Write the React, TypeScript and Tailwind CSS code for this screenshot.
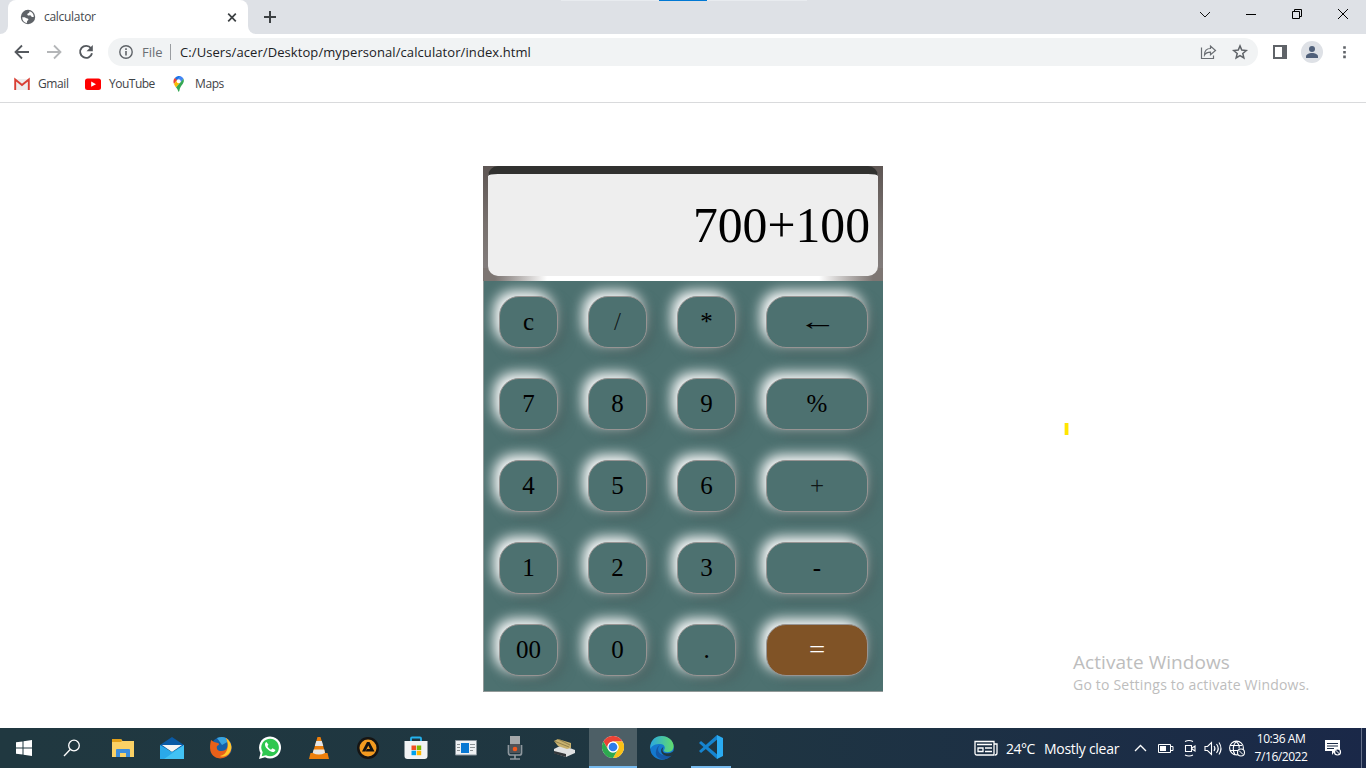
import React from "react";

type P = { children?: React.ReactNode; className?: string };

function Svg({ w, h, vb, children, className = "" }: P & { w: number; h: number; vb?: string }) {
  return (
    <svg width={w} height={h} viewBox={vb ?? `0 0 ${w} ${h}`} className={`shrink-0 ${className}`} fill="none">
      {children}
    </svg>
  );
}

function TabStrip() {
  return (
    <header className="flex h-[34px] shrink-0 bg-[#dee1e6]">
      <div className="flex w-2 items-end bg-white">
        <span className="h-[34px] w-2 rounded-br-lg bg-[#dee1e6]" />
      </div>
      <div className="flex w-[240px] items-center bg-[#dee1e6]">
        <div className="flex h-full w-full items-center rounded-t-lg bg-white pl-3">
          <Svg w={16} h={16} vb="0 0 16 16">
            <circle cx="8" cy="8" r="7.2" fill="#5f6368" />
            <path d="M2.2 8.2c1.2.2 2.3-.2 3.400.5 1.200.8 2.700.5 2.800 1.900.1 1-1.400 1-1.400 2.200v1.300C4.200 13.700 2.200 11.500 2.200 8.200zM9.500 2.300c0 1.300-.3 1.900-1.500 2.100-1 .2-.8 1.500-.2 1.900.9.600 1.500-.4 2.500 0 1 .5.8 1.700 1.900 1.800h1.600c0-2.900-1.700-5-4.300-5.800z" fill="#fff" />
          </Svg>
          <span className="ml-2 w-[180px] text-[12px] tracking-[-0.3px] text-[#45494d]">calculator</span>
          <Svg w={16} h={16}>
            <path d="M4.200 4.700l7.600 7.600M11.800 4.700l-7.600 7.600" stroke="#3c4043" strokeWidth="1.700" />
          </Svg>
        </div>
      </div>
      <div className="flex w-2 items-end bg-white">
        <span className="h-[34px] w-2 rounded-bl-lg bg-[#dee1e6]" />
      </div>
      <Svg w={28} h={34}>
        <path d="M8 17h12M14 11v12" stroke="#3c4043" strokeWidth="2" />
      </Svg>
      <div className="flex flex-1">
        <div className="ml-[277px] flex h-px w-[246px] bg-[#e8ebef]">
          <span className="ml-[98px] h-px w-[48px] bg-[#0078d4]" />
        </div>
      </div>
      <div className="flex w-[184px] shrink-0">
        <Svg w={46} h={28}>
          <path d="M18 12l5 5 5-5" stroke="#111" strokeWidth="1" />
        </Svg>
        <Svg w={46} h={28}>
          <path d="M18 14.500h10" stroke="#000" />
        </Svg>
        <Svg w={46} h={28}>
          <path d="M18.500 11.500h7v7h-7zM20.500 11.500v-2h7v7h-2" stroke="#000" />
        </Svg>
        <Svg w={46} h={28}>
          <path d="M18 9l10 10M28 9L18 19" stroke="#000" />
        </Svg>
      </div>
    </header>
  );
}

function Toolbar() {
  return (
    <nav className="flex h-9 shrink-0 items-center bg-white">
      <Svg w={108} h={36}>
        <path d="M29 18H16M22 11.500L15.500 18l6.500 6.500" stroke="#55595e" strokeWidth="1.800" />
        <path d="M47 18h13M54 11.500l6.500 6.500-6.500 6.500" stroke="#b4b6b8" strokeWidth="1.800" />
        <path d="M91 14.300A6 6 0 1 0 92 19.200" stroke="#55595e" strokeWidth="1.900" />
        <path d="M92.800 11v6.300h-6.300z" fill="#55595e" />
      </Svg>
      <div className="flex h-7 w-[1150px] items-center rounded-full bg-[#f1f3f4] pl-[11px]">
        <Svg w={14} h={14}>
          <circle cx="7" cy="7" r="6.200" stroke="#5f6368" strokeWidth="1.400" />
          <path d="M7 6v4.500M7 3.300v1.600" stroke="#5f6368" strokeWidth="1.600" />
        </Svg>
        <span className="ml-[9px] w-[28px] pt-px text-[13px] text-[#6a6e73]">File</span>
        <span className="h-4 w-px bg-[#9a9da1]" />
        <span className="ml-[9px] pt-px text-[13px] tracking-[0.085px] whitespace-nowrap text-[#202124]">C:/Users/acer/Desktop/mypersonal/calculator/index.html</span>
        <Svg w={56} h={28} className="mr-[5px] ml-auto">
          <path d="M4.500 9.500v11h12v-3" stroke="#6a6e73" strokeWidth="1.200" />
          <path d="M7.500 17c0-4 2-6.500 6-6.500V8l5 4.500-5 4.200v-2.500c-3 0-4.800.8-6 2.800z" stroke="#6a6e73" strokeWidth="1.200" />
          <path d="M43 -6.600l1.750 4.200 4.500.4-3.450 3 1.050 4.400L43 3.050l-3.850 2.350 1.050-4.400-3.450-3 4.500-.4z" transform="translate(-8 14.500) translate(8 0)" stroke="#5f6368" strokeWidth="1.500" />
        </Svg>
      </div>
      <Svg w={108} h={36}>
        <path d="M16 12h11v12H16z" stroke="#5f6368" strokeWidth="2" />
        <path d="M24 11h5v14h-5z" fill="#5f6368" />
        <circle cx="54" cy="18" r="11" fill="#dee1e6" />
        <circle cx="54" cy="15" r="3" fill="#50607a" />
        <path d="M48 24v-1.500c0-2 3-3.500 6-3.500s6 1.500 6 3.500V24z" fill="#50607a" />
        <path d="M85.200 12.200h2.600v2.600h-2.600zM85.200 16.900h2.600v2.600h-2.600zM85.200 21.600h2.600v2.600h-2.600z" fill="#5f6368" />
      </Svg>
    </nav>
  );
}

function Bookmarks() {
  return (
    <div className="flex h-[33px] shrink-0 items-start border-b border-[#d9dadc] bg-white pt-[6px] pl-[14px]">
      <div className="flex h-4 items-center text-[12px] text-[#3f4347]">
        <Svg w={16} h={16}>
          <path d="M1 3h14v11H1z" fill="#eee" />
          <path d="M1.200 14V3.500L8 9l6.800-5.500V14" stroke="#d93f34" strokeWidth="1.900" />
        </Svg>
        <span className="ml-2 w-[47px] tracking-[-0.4px]">Gmail</span>
        <Svg w={16} h={16}>
          <rect y="2.500" width="16" height="11.500" rx="2.500" fill="#f00" />
          <path d="M6.200 5.500v5.300L11 8.200z" fill="#fff" />
        </Svg>
        <span className="ml-2 w-[62px] tracking-[-0.5px]">YouTube</span>
        <Svg w={18} h={16}>
          <g transform="translate(2 0)">
            <path d="M1.800 2A5.500 5.500 0 0 1 7.500.2L3.800 5z" fill="#1a73e8" />
            <path d="M1.800 2l2.300 2L1 8C0 6 .3 3.700 1.800 2z" fill="#ea4335" />
            <path d="M7 .1a5.500 5.500 0 0 1 3.500 2.700L7.300 7 4.200 4z" fill="#4285f4" />
            <path d="M1 8l3-4c0 2 2 3.700 3.600 2.600L3 11.500C2.200 10.300 1.400 9.200 1 8z" fill="#fbbc04" />
            <path d="M10.500 2.800c1.500 4-2 6-3.500 9.500-.5 1.200-.5 3.500-1.200 3.500s-.6-2.200-2.800-4.300z" fill="#34a853" />
            <circle cx="5.700" cy="5.300" r="2" fill="#fff" />
          </g>
        </Svg>
        <span className="ml-[6px] tracking-[-0.4px]">Maps</span>
      </div>
    </div>
  );
}

const rows = [
  ["c", "/", "*", "←"],
  ["7", "8", "9", "%"],
  ["4", "5", "6", "+"],
  ["1", "2", "3", "-"],
  ["00", "0", ".", "="],
];

const glyphStyle: Record<string, string> = {
  "←": "inline-block scale-x-[1.55]",
  "=": "inline-block scale-x-[1.15]",
  "/": "text-black/75",
  "+": "text-black/80",
};

function Calculator() {
  return (
    <section className="mt-[63px] h-[526px] w-[400px] overflow-hidden font-['Liberation_Serif',serif] text-black">
      <div className="flex h-[115px] flex-col bg-linear-to-b from-[#5e5654] via-[#77706d] to-[#858080]">
        <div className="relative z-10 mx-[5px] flex h-[110px] shrink-0 items-center justify-end rounded-[10px] border-t-[8px] border-[#31312f] bg-[#eee] pr-2 text-[49.700px]">
          <span className="pt-px leading-none">700+100</span>
        </div>
        <div className="-mt-2 h-[13px] shrink-0 bg-linear-to-r from-[#7d7673] from-[3%] via-white via-[16%] to-white to-[50%]">
          <div className="ml-auto h-full w-1/2 bg-linear-to-r from-white from-[68%] to-[#7d7673] to-[95%]" />
        </div>
      </div>
      <div className="flex h-[411px] flex-col gap-[30px] overflow-hidden border-b border-l border-[#929a99] bg-[#4d7170] pt-[15px] pl-[15px]">
        {rows.map((row) => (
          <div key={row[0]} className="flex gap-[30px]">
            {row.map((k, i) => (
              <button
                key={k}
                className={`flex h-[52px] items-center justify-center rounded-[20px] border border-[#979493] text-[25px] shadow-[-5px_-5px_13px_#fff,5px_5px_13px_#496261] ${i === 3 ? "w-[102px]" : "w-[59px]"} ${k === "=" ? "bg-[#805326] text-white" : "bg-[#4d7170]"}`}
              >
                <span className={glyphStyle[k] ?? ""}>{k}</span>
              </button>
            ))}
          </div>
        ))}
      </div>
    </section>
  );
}

function TaskIcon({ children, className = "" }: P) {
  return <div className={`flex h-10 w-12 items-center justify-center ${className}`}>{children}</div>;
}

function Taskbar() {
  return (
    <footer className="flex h-10 shrink-0 bg-linear-to-r from-[#203840] via-[#1f3641] to-[#1a2848] font-['Open_Sans','Noto_Sans',sans-serif] text-white">
      <TaskIcon>
        <Svg w={16} h={16}>
          <path d="M0 2.300l6.500-.9v6.100H0zM7.500 1.200L16 0v7.500H7.500zM0 8.500h6.500v6.100L0 13.700zM7.500 8.500H16V16l-8.500-1.200z" fill="#fff" />
        </Svg>
      </TaskIcon>
      <TaskIcon>
        <Svg w={18} h={18}>
          <circle cx="11" cy="6.500" r="5.300" stroke="#fff" strokeWidth="1.300" />
          <path d="M7.200 10.500L1 17" stroke="#fff" strokeWidth="1.300" />
        </Svg>
      </TaskIcon>
      <TaskIcon className="pl-[6px]">
        <Svg w={22} h={20}>
          <path d="M0 1h9l1.500 2H22v16H0z" fill="#fad165" />
          <path d="M0 1h9l1 2-1 1H0z" fill="#e2a019" />
          <path d="M4 19v-7q0-1 1-1h12q1 0 1 1v7h-4v-4H8v4z" fill="#3d8ddb" />
        </Svg>
      </TaskIcon>
      <TaskIcon className="pl-[8px]">
        <Svg w={24} h={23}>
          <path d="M0 8l12-8 12 8v4H0z" fill="#0a5aa5" />
          <path d="M2 8h20l-10 7z" fill="#f5f5f5" />
          <path d="M0 8v14h24V8l-12 7z" fill="#2aa9ea" />
          <path d="M24 8v14H4z" fill="#42c2f4" />
        </Svg>
      </TaskIcon>
      <TaskIcon className="pl-[9px]">
        <Svg w={24} h={24}>
          <circle cx="12.500" cy="11.500" r="10.500" fill="#1560a8" />
          <path d="M8 2c5-2 10-1 12 3l-7 4z" fill="#39a4df" />
          <path d="M17 2c5 3 7 10 4 15s-10 7-15 4S0 12 2 4l3 2 4 1c2 1 1 2-1 3-1 3 1 5 4 5s5-1 6-3c2-4 0-7-1-10z" fill="#e8601a" />
          <path d="M17 2c5 4 7 9 4 14s-8 5-10 4c7-1 10-10 6-18z" fill="#ffc82b" />
        </Svg>
      </TaskIcon>
      <TaskIcon className="pl-[12px]">
        <Svg w={24} h={24}>
          <path d="M1 23l1.500-6A11 11 0 1 1 7 21.300z" fill="#fff" />
          <path d="M3.700 20.300l1-4A8.800 8.800 0 1 1 8 19.300z" fill="#2fc750" />
          <path d="M8.500 6c-2.500 1-2 5 2 8s6 2.500 7 0l-3-1.700-1.500 1.400c-2-1-3-2-3.500-3.700l1-1.200z" fill="#fff" />
        </Svg>
      </TaskIcon>
      <TaskIcon className="pl-[14px]">
        <Svg w={22} h={24}>
          <path d="M2.500 17h17L21 23H1z" fill="#ed7f0c" />
          <path d="M9.500 1h3l5 17q-6 3-13 0z" fill="#ed7f0c" />
          <path d="M8.300 5h5.500l1.500 5H6.800zM5.700 13.500h10.600L17 17q-6 3-12.300 0z" fill="#e6e6e6" />
        </Svg>
      </TaskIcon>
      <TaskIcon className="pl-[16px]">
        <Svg w={24} h={24}>
          <circle cx="12" cy="12" r="11" fill="#151413" />
          <circle cx="12" cy="12" r="8.500" fill="#f39b20" />
          <path d="M11 6h2.500l5 9.500H9.500L11 13h3l-1.700-3.500-3 6H6z" fill="#111" />
        </Svg>
      </TaskIcon>
      <TaskIcon className="pl-[16px]">
        <Svg w={24} h={24}>
          <path d="M7 6V2.500q0-1 1-1h8q1 0 1 1V6" stroke="#24b3ef" strokeWidth="1.800" />
          <path d="M.5 5h23v15q0 3-3 3h-17q-3 0-3-3z" fill="#f1f3f4" />
          <path d="M7.500 9.500H12V14H7.500z" fill="#f04e23" />
          <path d="M12.700 9.500h4.500V14h-4.500z" fill="#7fb900" />
          <path d="M7.500 14.700H12v4.500H7.500z" fill="#00a3ee" />
          <path d="M12.700 14.700h4.500v4.500h-4.500z" fill="#ffb800" />
        </Svg>
      </TaskIcon>
      <TaskIcon className="pl-[20px]">
        <Svg w={22} h={18}>
          <path d="M.5 1.500h21V16H.5z" fill="#eef1f3" stroke="#87929a" />
          <path d="M6 4h8v10H6z" fill="#0878d3" />
          <path d="M2 5.500h3M2 8.500h3M2 11.500h3M15 5.500h5M15 8.500h5M15 11.500h3" stroke="#8b9194" />
        </Svg>
      </TaskIcon>
      <TaskIcon className="pl-[22px]">
        <Svg w={16} h={24}>
          <path d="M3 0h10v17H3z" fill="#a6a8aa" />
          <path d="M3 8h10v9H3z" fill="#505358" />
          <path d="M1.500 9v8q0 2 2 2h9q2 0 2-2V9M8 19v4M3 23h10" stroke="#8e979d" strokeWidth="1.700" />
          <circle cx="8" cy="13" r="2.300" fill="#f4581c" />
        </Svg>
      </TaskIcon>
      <TaskIcon className="pl-[24px]">
        <Svg w={22} h={18}>
          <path d="M1 10l8-4 13 5v3l-9 4-12-4z" fill="#dfe1e2" />
          <path d="M1 12l12 3v3L1 14.500z" fill="#34383b" />
          <path d="M1 2l4-2 13 4v5l-4 1-9-3z" fill="#c9b26e" />
          <path d="M1 2l15 6M5 0l12 6" stroke="#796c40" strokeWidth=".7" />
        </Svg>
      </TaskIcon>
      <div className="flex w-[13px] shrink-0" />
      <TaskIcon className="border-b-2 border-[#76b9ed] bg-[#4d5f66]">
        <Svg w={22} h={22} vb="0 0 48 48">
          <circle cx="24" cy="24" r="24" fill="#fff" />
          <path d="M3.200 12A24 24 0 0 1 44.800 12H24A12 12 0 0 0 13.600 30z" fill="#ea4335" />
          <path d="M44.800 12A24 24 0 0 1 24 48L34.400 30A12 12 0 0 0 24 12z" fill="#fbc116" />
          <path d="M24 48A24 24 0 0 1 3.200 12L13.600 30A12 12 0 0 0 34.400 30z" fill="#2da94f" />
          <circle cx="24" cy="24" r="12" fill="#fff" />
          <circle cx="24" cy="24" r="9.500" fill="#2f7de9" />
        </Svg>
      </TaskIcon>
      <TaskIcon className="pl-[2px]">
        <Svg w={24} h={24}>
          <defs>
            <linearGradient id="edge" x1="0" x2="1"><stop stopColor="#2aa8e0" /><stop offset="1" stopColor="#62dc6b" /></linearGradient>
          </defs>
          <circle cx="12" cy="12" r="11.800" fill="#1479cf" />
          <path d="M.3 10C2-1 14-2 20 3c5 4 5 12-1 13-3 .5-6-.5-5-2 2-3 0-6-4-6S2 9 .3 13z" fill="url(#edge)" />
          <path d="M10 9c-5 5 0 13 12 10-5 7-18 5-16-4 .5-3 2-5 4-6z" fill="#1558a5" />
          <path d="M13.500 11c-2 3-1 6 2.500 6.300 3 .3 5.500-.3 7.500-2.300l1.500 2-2 2.500c-5 1.500-10 .5-11.500-3-.8-2.500 0-4.500 2-5.500z" fill="#203742" />
        </Svg>
      </TaskIcon>
      <TaskIcon className="pl-[3px]">
        <div className="flex h-10 w-10 items-center justify-center border-b-2 border-[#76b9ed]">
          <Svg w={24} h={24}>
            <path d="M0 8l2-2 18 15-2 3z" fill="#1684cf" />
            <path d="M0 16l2 2L20 3l-2-3z" fill="#1684cf" />
            <path d="M18 0l6 3v18l-6 3z" fill="#2aabf2" />
          </Svg>
        </div>
      </TaskIcon>
      <div className="ml-auto flex h-10 items-center">
        <Svg w={24} h={18}>
          <path d="M1 2.500h19V16H3q-2 0-2-2zM20 5h3v9q0 2-2 2" stroke="#fff" strokeWidth="1.300" />
          <path d="M3 5.500h15M11 9h7M11 12.500h7M4 9h5v3.500H4z" stroke="#fff" strokeWidth="1.300" />
        </Svg>
        <span className="ml-2 w-[38px] text-[14px] tracking-[-0.500px] whitespace-nowrap">24°C</span>
        <span className="w-[88px] text-[14px] tracking-[-0.280px] whitespace-nowrap">Mostly clear</span>
        <Svg w={117} h={40}>
          <path d="M3 23l5.500-5.500L14 23" stroke="#fff" strokeWidth="1.300" />
          <path d="M26.500 16.500h12v8h-12zM39 18.500h2v4h-2" stroke="#fff" />
          <path d="M28 18h6v5h-6z" fill="#fff" />
          <path d="M53.500 17.500h6v6h-6zM60 20l3-2v5l-3-2M53 13.500q4-2 8 0M53 27q4 2 8 0" stroke="#fff" strokeWidth="1.100" />
          <path d="M73 18.500h2.500l4-4v12l-4-4H73zM82 18q2 2.500 0 5M84.500 16q3.500 4.500 0 9M87 14.500q4 6 0 12" stroke="#fff" strokeWidth="1.100" />
          <circle cx="104.500" cy="20" r="6.900" stroke="#fff" strokeWidth="1.100" />
          <path d="M98 17.500h12M98 22.500h8M103 27q-4-7 1-13.500 4 3 3 7" stroke="#fff" strokeWidth="1.100" />
          <circle cx="109" cy="24.500" r="3.500" fill="#1c2c45" stroke="#fff" strokeWidth="1.100" />
          <path d="M107 22.500l4 4" stroke="#fff" />
        </Svg>
        <div className="ml-[2px] flex w-[60px] flex-col items-center text-[12px] leading-[18px] tracking-[-0.450px] whitespace-nowrap">
          <span>10:36 AM</span>
          <span>7/16/2022</span>
        </div>
        <Svg w={18} h={18} className="ml-[13px]">
          <path d="M1 1h15v11h-5l-3 4v-4H1z" fill="#fff" />
          <path d="M3 4.500h11M3 7h11M3 9.500h7" stroke="#1c2c47" />
          <circle cx="13.500" cy="13" r="3" fill="#1a2947" stroke="#fff" strokeWidth="1.200" />
          <path d="M11.500 11l4 4" stroke="#fff" />
        </Svg>
        <span className="ml-[19px] h-10 w-px bg-[#66718a]" />
        <span className="w-1" />
      </div>
    </footer>
  );
}

export default function App() {
  return (
    <div className="flex h-[768px] w-[1366px] flex-col overflow-hidden bg-white font-['Open_Sans','Noto_Sans',sans-serif]">
      <TabStrip />
      <Toolbar />
      <Bookmarks />
      <main className="relative flex flex-1 justify-center overflow-hidden">
        <Calculator />
        <span className="absolute top-[320px] left-[1064px] h-3 w-[5px] border-x border-[#fff2a0] bg-[#ffe600]" />
        <div className="absolute top-[546px] left-[1073px] flex flex-col whitespace-nowrap text-[#bdbdbd]">
          <span className="text-[19px] leading-[26px] tracking-[0.060px]">Activate Windows</span>
          <span className="text-[14px] leading-[20px] tracking-[0.200px]">Go to Settings to activate Windows.</span>
        </div>
      </main>
      <Taskbar />
    </div>
  );
}
